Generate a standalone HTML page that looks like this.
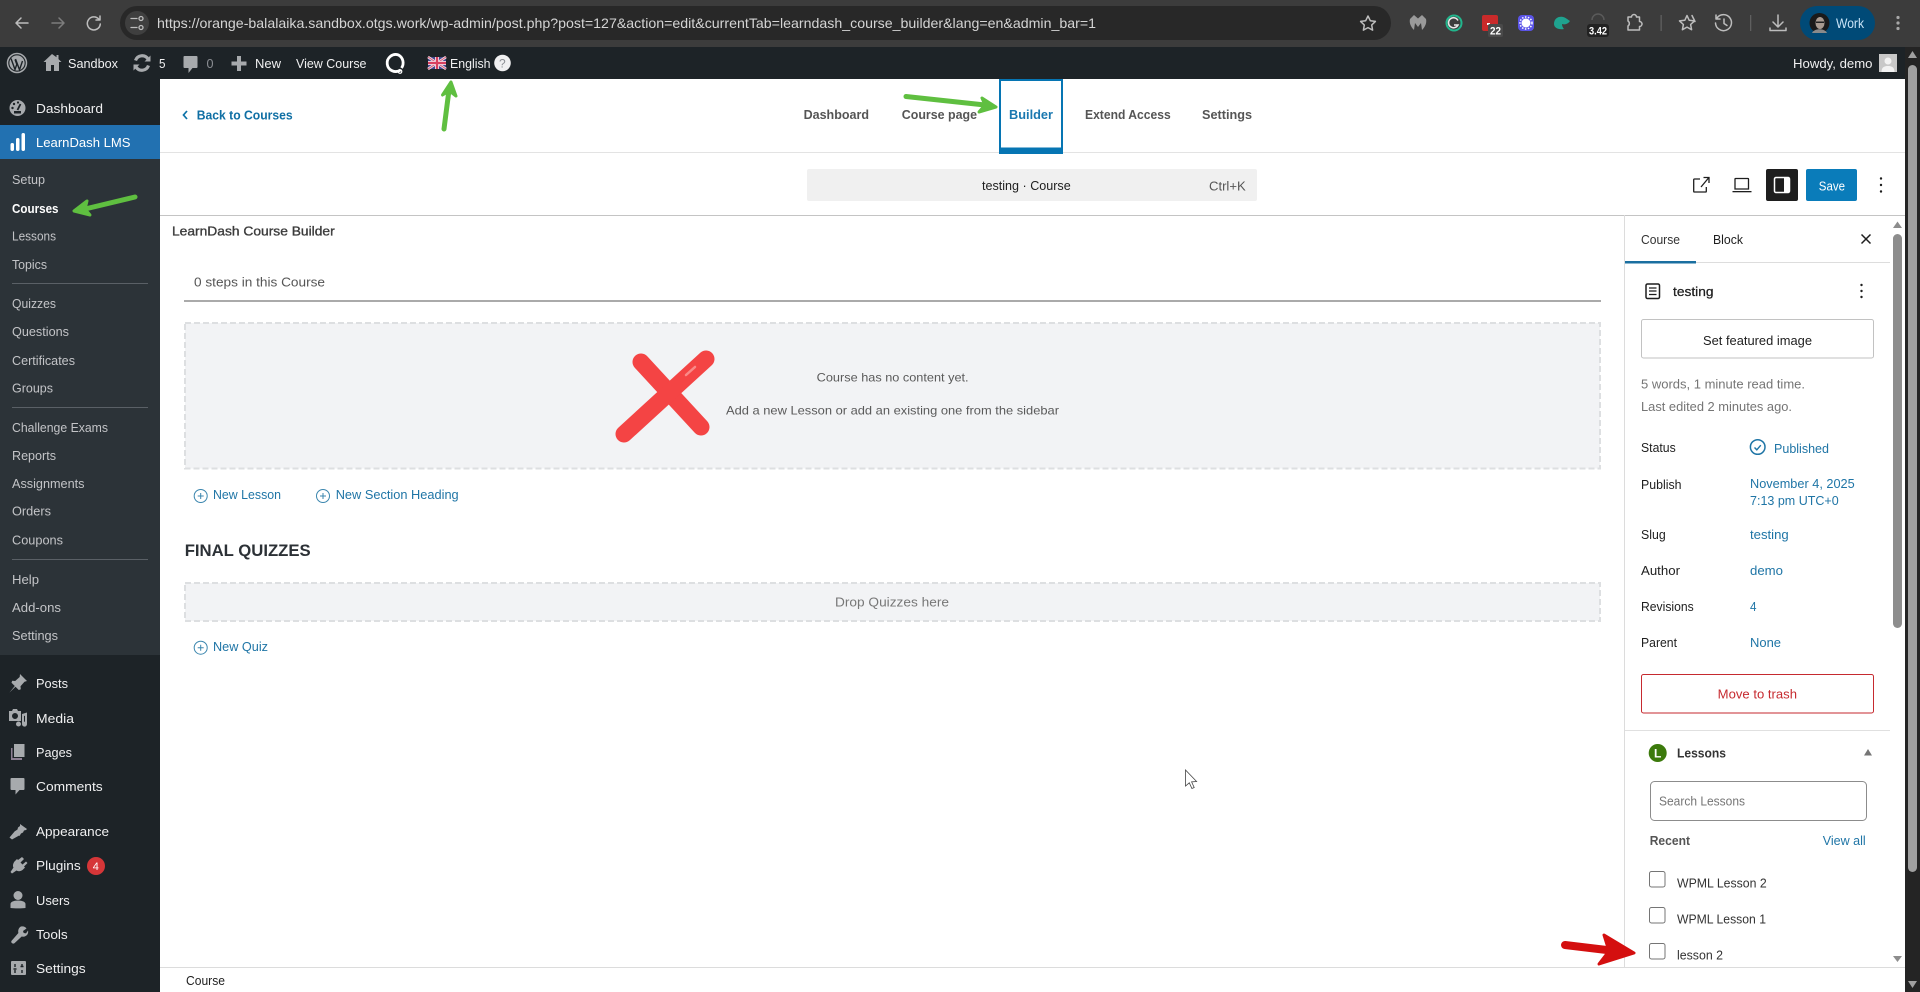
<!DOCTYPE html>
<html lang="en">
<head>
<meta charset="utf-8">
<title>testing - Course Builder</title>
<style>
html,body{margin:0;padding:0;width:1920px;height:992px;overflow:hidden;background:#fff}
svg{display:block}
text{font-family:"Liberation Sans",Arial,sans-serif;font-size:13px;white-space:pre}
.s{fill:#c3c4c7}
.m{fill:#f0f0f1}
.d{fill:#1e1e1e}
.l{fill:#1f75a6}
.b{font-weight:700}
.ic{fill:#a7aaad}
.cs{fill:none;stroke:#bdbdbd;stroke-width:1.5;stroke-linecap:round;stroke-linejoin:round}
.ts{fill:none;stroke:#1e1e1e;stroke-width:1.3}
</style>
</head>
<body>
<svg width="1920" height="992" viewBox="0 0 1920 992" xmlns="http://www.w3.org/2000/svg">
<rect width="1920" height="992" fill="#fff"/>

<!-- Browser toolbar -->
<rect width="1920" height="47" fill="#3c3c3c"/>
<path class="cs" d="M28 23H16M21 18l-5 5 5 5"/>
<path class="cs" style="stroke:#7d7d7d" d="M52 23h12M59 18l5 5-5 5"/>
<path class="cs" d="M99 19.500a6.500 6.500 0 1 0 1.300 4.500M100 16v4h-4"/>
<rect x="120" y="6" width="1271" height="34" rx="17" fill="#282828"/>
<circle cx="137" cy="23" r="12" fill="#3f3f3f"/>
<path class="cs" style="stroke-width:1.300" d="M131 18.500h6M131 27.500h6"/>
<circle cx="141" cy="18.500" r="2" class="cs" style="stroke-width:1.300"/>
<circle cx="141" cy="27.500" r="2" class="cs" style="stroke-width:1.300"/>
<text x="157" y="28" style="font-size:14px" fill="#d4d4d4" textLength="939" lengthAdjust="spacingAndGlyphs">https://orange-balalaika.sandbox.otgs.work/wp-admin/post.php?post=127&amp;action=edit&amp;currentTab=learndash_course_builder&amp;lang=en&amp;admin_bar=1</text>
<path class="cs" d="M1368 16l2.300 4.700 5.100.7-3.700 3.600.9 5.100-4.600-2.500-4.600 2.500.9-5.100-3.700-3.600 5.100-.7z"/>

<!-- Extensions -->
<path fill="#9a9a9a" d="M1410 19l4-4 4 3.500 4-3.500 4 4c1 4-1 8-4 11l-1-7-3 4-3-4-1 7c-3-3-5-7-4-11z"/>
<circle cx="1454" cy="23" r="7.500" fill="none" stroke="#22b58c" stroke-width="2"/>
<path d="M1458 20.500a5 5 0 1 0 0 4.500h-4" fill="none" stroke="#e8e8e8" stroke-width="1.600"/>
<rect x="1482" y="15" width="16" height="16" rx="2" fill="#c92a2a"/>
<rect x="1487" y="23" width="3" height="2" fill="#fff"/>
<rect x="1488" y="24" width="15" height="13" rx="2" fill="#4a4a4a"/>
<text x="1490" y="34.500" style="font-size:11px;font-weight:700" fill="#fff" textLength="11" lengthAdjust="spacingAndGlyphs">22</text>
<rect x="1518" y="15" width="16" height="16" rx="4" fill="#5b54e8"/>
<circle cx="1526" cy="23" r="4.500" fill="#fff"/>
<circle cx="1526" cy="23" r="6" fill="none" stroke="#fff" stroke-width="1.500" stroke-dasharray="1.500 1.500"/>
<path d="M1554 24c0-6 5-8 9-7 3 .5 5 3 7 4-2 3-5 4-8 3 0 2 1 4 2 5-5 1-10-1-10-5z" fill="#1fa38f"/>
<path d="M1592 20a6 6 0 0 1 12 0" fill="none" stroke="#5a5a5a" stroke-width="1.500"/>
<rect x="1587" y="24" width="22" height="13" rx="3" fill="#222"/>
<text x="1589" y="34.500" style="font-size:11px;font-weight:700" fill="#fff" textLength="18" lengthAdjust="spacingAndGlyphs">3.42</text>
<path class="cs" d="M1628 17h3.500a2.500 2.500 0 0 1 5 0h3v4.500a2.500 2.500 0 0 1 0 5V30h-11.500v-4a3 3 0 0 0 0-5z"/>
<rect x="1660.500" y="15" width="1.300" height="16" fill="#5f5f5f"/>
<path class="cs" d="M1687 15.500l2.200 4.800 5.300.6-3.900 3.600 1 5.200-4.600-2.600-4.600 2.600 1-5.200-3.900-3.600 5.300-.6zM1692 15.500l3 6"/>
<path class="cs" d="M1717 18a8 8 0 1 1-1.500 5M1716 15v4h4M1724 19v4.500l3 2"/>
<rect x="1750" y="15" width="1.300" height="16" fill="#5f5f5f"/>
<path class="cs" d="M1778 15v11M1773 22l5 5 5-5M1770 28v2.500h16V28"/>
<rect x="1800" y="6" width="75" height="34" rx="17" fill="#004a77"/>
<circle cx="1819.500" cy="23" r="10" fill="#1a1a1a"/>
<ellipse cx="1820" cy="23" rx="4.500" ry="6" fill="#a89a90"/>
<path d="M1812 33c2-5 13-5 15 0z" fill="#8a8a8a"/>
<rect x="1816" y="21.500" width="8" height="1.500" fill="#222"/>
<text x="1836" y="28" style="font-size:14px" fill="#c7e3f7" textLength="28" lengthAdjust="spacingAndGlyphs">Work</text>
<g fill="#a8a8a8"><circle cx="1898" cy="17.500" r="1.600"/><circle cx="1898" cy="23" r="1.600"/><circle cx="1898" cy="28.500" r="1.600"/></g>

<!-- Admin bar -->
<rect y="47" width="1920" height="32" fill="#1d2327"/>
<circle cx="17" cy="63" r="9.500" fill="none" stroke="#a7aaad" stroke-width="1.500"/>
<circle cx="17" cy="63" r="7.600" fill="#a7aaad"/>
<path d="M11 58.500l4 11 1.800-5.200L15 59.500M15.500 59l4 10.800 3-8.800" fill="none" stroke="#1d2327" stroke-width="1.400"/>
<path class="ic" d="M52 54l-8.500 8h2.500v9h5v-6h3v6h5v-9h2.500l-3-2.900V55h-2v2.200z"/>
<text class="m" x="68" y="68" textLength="50" lengthAdjust="spacingAndGlyphs">Sandbox</text>
<path d="M135.500 60.500a7 7 0 0 1 12.500-1.500M148.500 65.500a7 7 0 0 1-12.500 1.500" fill="none" stroke="#a7aaad" stroke-width="3.200"/>
<path class="ic" d="M150.500 55.500v6h-6zM133.500 70.500v-6h6z"/>
<text class="m" x="159" y="68" textLength="6.500" lengthAdjust="spacingAndGlyphs">5</text>
<path class="ic" d="M184.500 56h12a1 1 0 0 1 1 1v10a1 1 0 0 1-1 1h-4l-4 5v-5h-4a1 1 0 0 1-1-1V57a1 1 0 0 1 1-1z"/>
<text x="206.500" y="68" fill="#8c8f94" textLength="7" lengthAdjust="spacingAndGlyphs">0</text>
<path class="ic" d="M237 56h4v5.500h5.500v4H241V71h-4v-5.500h-5.500v-4H237z"/>
<text class="m" x="255" y="68" textLength="26" lengthAdjust="spacingAndGlyphs">New</text>
<text class="m" x="296" y="68" textLength="70.500" lengthAdjust="spacingAndGlyphs">View Course</text>
<path d="M400.500 70a8.500 8.500 0 1 1-2-15 9 9 0 0 1 3 13" fill="none" stroke="#fff" stroke-width="2.800"/>
<circle cx="400" cy="71.500" r="1.800" fill="none" stroke="#fff" stroke-width="1.200"/>
<!-- flag -->
<g>
<rect x="428" y="57" width="18" height="12" fill="#41478f"/>
<path d="M428 57l18 12M446 57l-18 12" stroke="#f2dce4" stroke-width="2.600"/>
<path d="M428 57l18 12M446 57l-18 12" stroke="#d85a78" stroke-width="1"/>
<path d="M437 57v12M428 63h18" stroke="#f2dce4" stroke-width="4"/>
<path d="M437 57v12M428 63h18" stroke="#d8405f" stroke-width="2.200"/>
</g>
<text class="m" x="450" y="68" textLength="40.500" lengthAdjust="spacingAndGlyphs">English</text>
<circle cx="502.500" cy="63" r="8.300" fill="#f0f0f1"/>
<text x="499" y="67.500" style="font-size:12px" fill="#8c8f94">?</text>
<text class="m" x="1793" y="68" textLength="79.500" lengthAdjust="spacingAndGlyphs">Howdy, demo</text>
<rect x="1879" y="54" width="18" height="18" fill="#c8c8c8"/>
<circle cx="1888" cy="61" r="3.500" fill="#f2f2f2"/>
<path d="M1881.500 72c0-5 3-6 6.500-6s6.500 1 6.500 6z" fill="#f2f2f2"/>

<!-- Sidebar -->
<rect y="79" width="160" height="913" fill="#1d2327"/>
<rect y="159" width="160" height="496" fill="#2c3338"/>
<rect y="125" width="160" height="34" fill="#2271b1"/>

<circle cx="17.500" cy="108" r="8" class="ic"/>
<path d="M17.500 110l3-6" stroke="#1d2327" stroke-width="1.800"/>
<g fill="#1d2327"><circle cx="12.500" cy="108" r="1.200"/><circle cx="14" cy="104" r="1.200"/><circle cx="18" cy="102.500" r="1.100"/><rect x="14" y="111" width="7" height="2.500"/></g>
<text class="m" x="36" y="113" textLength="67" lengthAdjust="spacingAndGlyphs">Dashboard</text>
<g fill="#fff"><rect x="10.500" y="143" width="3.500" height="8" rx="1.700"/><rect x="16" y="138" width="3.500" height="13" rx="1.700"/><rect x="21.500" y="133" width="3.500" height="18" rx="1.700"/></g>
<text fill="#fff" x="36" y="147" textLength="94.500" lengthAdjust="spacingAndGlyphs">LearnDash LMS</text>

<text class="s" x="12" y="184" textLength="33" lengthAdjust="spacingAndGlyphs">Setup</text>
<text fill="#fff" class="b" x="12" y="213" textLength="46.500" lengthAdjust="spacingAndGlyphs">Courses</text>
<text class="s" x="12" y="240.500" textLength="44" lengthAdjust="spacingAndGlyphs">Lessons</text>
<text class="s" x="12" y="269" textLength="35" lengthAdjust="spacingAndGlyphs">Topics</text>
<rect x="12" y="283" width="136" height="1" fill="#5a6066"/>
<text class="s" x="12" y="308" textLength="44" lengthAdjust="spacingAndGlyphs">Quizzes</text>
<text class="s" x="12" y="336" textLength="57" lengthAdjust="spacingAndGlyphs">Questions</text>
<text class="s" x="12" y="365" textLength="63" lengthAdjust="spacingAndGlyphs">Certificates</text>
<text class="s" x="12" y="392.500" textLength="41" lengthAdjust="spacingAndGlyphs">Groups</text>
<rect x="12" y="407" width="136" height="1" fill="#5a6066"/>
<text class="s" x="12" y="432" textLength="96" lengthAdjust="spacingAndGlyphs">Challenge Exams</text>
<text class="s" x="12" y="460" textLength="44" lengthAdjust="spacingAndGlyphs">Reports</text>
<text class="s" x="12" y="488" textLength="72.500" lengthAdjust="spacingAndGlyphs">Assignments</text>
<text class="s" x="12" y="515.500" textLength="39" lengthAdjust="spacingAndGlyphs">Orders</text>
<text class="s" x="12" y="544.500" textLength="51" lengthAdjust="spacingAndGlyphs">Coupons</text>
<rect x="12" y="559" width="136" height="1" fill="#5a6066"/>
<text class="s" x="12" y="584" textLength="27" lengthAdjust="spacingAndGlyphs">Help</text>
<text class="s" x="12" y="612" textLength="49" lengthAdjust="spacingAndGlyphs">Add-ons</text>
<text class="s" x="12" y="640" textLength="46" lengthAdjust="spacingAndGlyphs">Settings</text>

<path class="ic" d="M20 674l7 7-2.500.8-4 4.500.3 3-2 .7-3.300-3.300-6 5.800 5.300-6.500-3.300-3.300.7-2 3 .3 4.500-4z"/>
<text class="m" x="36" y="688" textLength="32" lengthAdjust="spacingAndGlyphs">Posts</text>
<path class="ic" fill-rule="evenodd" d="M9 711h3l1-2h4l1 2h3v10H9zM15 713a3 3 0 1 0 0 6 3 3 0 0 0 0-6z"/>
<path class="ic" d="M22 714l5-1.500V724a2.500 2.500 0 1 1-2-2.300v-6l-1 .3v7.500h-2z"/>
<circle cx="18.500" cy="724" r="2.500" class="ic"/>
<text class="m" x="36" y="723" textLength="38" lengthAdjust="spacingAndGlyphs">Media</text>
<path class="ic" d="M14 744h10.500v13H14z"/>
<path d="M11 748h1.500v10H22v2H11z" fill="#8d7f93"/>
<text class="m" x="36" y="757" textLength="36" lengthAdjust="spacingAndGlyphs">Pages</text>
<path class="ic" d="M11.500 778h12a1 1 0 0 1 1 1v10a1 1 0 0 1-1 1h-4l-4 4.500V790h-4a1 1 0 0 1-1-1v-10a1 1 0 0 1 1-1z"/>
<text class="m" x="36" y="791" textLength="66.700" lengthAdjust="spacingAndGlyphs">Comments</text>
<path class="ic" d="M20 824l7 5-1 1-2 .5-1 2-2 1-1.500 2.500-5-4.500 3-2 .5-2 2-1.500zM15 831l5 4-8 4.500-2.500-2z"/>
<text class="m" x="36" y="836" textLength="73" lengthAdjust="spacingAndGlyphs">Appearance</text>
<path class="ic" d="M22 857l2 2-3.500 3.500 2 2 3.500-3 1.500 1.500-3.500 3.500 1 1-2.500 2.500c-2 1.500-4.500 1.500-6 .5l-4.500 3-1.500-1.500 3-4.500c-1-1.500-.5-4 1-6l2.500-2.500 1 1z"/>
<text class="m" x="36" y="870" textLength="44.700" lengthAdjust="spacingAndGlyphs">Plugins</text>
<circle cx="96" cy="866" r="9" fill="#d63638"/>
<text x="92.700" y="870" style="font-size:11px" fill="#fff">4</text>
<circle cx="18" cy="895.500" r="4.500" class="ic"/>
<path class="ic" d="M10.500 908v-4c0-2 3-3.500 7.500-3.500s7.500 1.500 7.500 3.500v4c-3 .5-12 .5-15 0z"/>
<text class="m" x="36" y="905" textLength="33.700" lengthAdjust="spacingAndGlyphs">Users</text>
<path class="ic" d="M21 926.500c2.500-.6 4.500.4 5.500 2l-3.500 2.500.7 2 2.300.4 2-2.900c.6 2.500-.5 5-3.300 6-1 .3-2 .3-3 0l-7 6.500c-1.500 1.500-4 0-3.300-2l7-8c-.7-2.800.6-5.700 2.600-6.500z"/>
<text class="m" x="36" y="939" textLength="31.700" lengthAdjust="spacingAndGlyphs">Tools</text>
<rect x="11" y="961" width="15" height="14" rx="1" class="ic"/>
<path d="M15 964v3M15 970v3M13.500 969h3M22 964v3M22 970v3M20.500 966.500h3" stroke="#1d2327" stroke-width="1.400" fill="none"/>
<text class="m" x="36" y="973" textLength="49.700" lengthAdjust="spacingAndGlyphs">Settings</text>

<!-- Header -->
<path d="M187 111l-3.500 4 3.500 4" fill="none" stroke="#0b72a8" stroke-width="1.700"/>
<text class="b" x="196.700" y="119.500" fill="#0f6fa4" textLength="96" lengthAdjust="spacingAndGlyphs">Back to Courses</text>
<rect x="160" y="152" width="1745" height="1" fill="#e3e3e3"/>
<text class="b" x="803.600" y="119" fill="#555" textLength="65.400" lengthAdjust="spacingAndGlyphs">Dashboard</text>
<text class="b" x="901.800" y="119" fill="#555" textLength="75.200" lengthAdjust="spacingAndGlyphs">Course page</text>
<rect x="999" y="79" width="2" height="75" fill="#0675b3"/>
<rect x="1061" y="79" width="2" height="75" fill="#0675b3"/>
<rect x="999" y="79" width="64" height="2" fill="#0675b3"/>
<rect x="999" y="147.500" width="64" height="6.500" fill="#0675b3"/>
<text class="b" x="1009" y="119" fill="#1a78b0" textLength="44" lengthAdjust="spacingAndGlyphs">Builder</text>
<text class="b" x="1085" y="119" fill="#555" textLength="85.700" lengthAdjust="spacingAndGlyphs">Extend Access</text>
<text class="b" x="1202" y="119" fill="#555" textLength="50" lengthAdjust="spacingAndGlyphs">Settings</text>

<!-- Editor top bar -->
<rect x="807" y="169" width="450" height="32" rx="2" fill="#f0f0f0"/>
<text class="d" x="982" y="190" textLength="88.700" lengthAdjust="spacingAndGlyphs">testing · Course</text>
<text x="1209" y="190.500" fill="#555" textLength="36.700" lengthAdjust="spacingAndGlyphs">Ctrl+K</text>
<path class="ts" d="M1700 179h-5.500a.8.800 0 0 0-.8.800v11.400a.8.800 0 0 0 .8.800h11a.8.800 0 0 0 .8-.8V187M1701 187l7.500-9M1703.500 177.500h5.500v5.500"/>
<path class="ts" d="M1735.500 178.500h12.500a.5.500 0 0 1 .5.500v10h-13.500v-10a.5.500 0 0 1 .5-.5z"/>
<rect x="1732.500" y="191" width="19" height="1.300" fill="#1e1e1e"/>
<rect x="1766" y="169" width="32" height="32" rx="2" fill="#1e1e1e"/>
<rect x="1774.500" y="177.500" width="15" height="15" rx="1.500" fill="none" stroke="#fff" stroke-width="1.500"/>
<rect x="1784" y="178" width="5" height="14" fill="#fff"/>
<rect x="1806" y="169" width="51" height="32" rx="2" fill="#0a7cba"/>
<text x="1818.800" y="190.500" fill="#fff" textLength="26.200" lengthAdjust="spacingAndGlyphs">Save</text>
<g fill="#1e1e1e"><circle cx="1881" cy="178.500" r="1.200"/><circle cx="1881" cy="185" r="1.200"/><circle cx="1881" cy="191.500" r="1.200"/></g>
<rect x="160" y="215" width="1745" height="1" fill="#c4c4c4"/>

<!-- Course builder -->
<text x="172" y="235.500" fill="#3c3c3c" stroke="#3c3c3c" stroke-width=".35" textLength="162.700" lengthAdjust="spacingAndGlyphs">LearnDash Course Builder</text>
<text x="194" y="286.700" fill="#555" textLength="131" lengthAdjust="spacingAndGlyphs">0 steps in this Course</text>
<rect x="184" y="300.500" width="1417" height="1" fill="#555"/>
<rect x="185" y="323" width="1415" height="145.500" fill="#f2f3f5" stroke="#dddfe1" stroke-width="2" stroke-dasharray="6 3"/>
<text x="816.700" y="381.700" style="font-size:12px" fill="#5a5a5a" textLength="151.900" lengthAdjust="spacingAndGlyphs">Course has no content yet.</text>
<text x="726" y="414.500" style="font-size:12px" fill="#5a5a5a" textLength="333" lengthAdjust="spacingAndGlyphs">Add a new Lesson or add an existing one from the sidebar</text>

<g fill="none" stroke="#f44444" stroke-linecap="round" stroke-width="17">
<path d="M641 362L701 427"/>
<path d="M706 359L624 434"/>
</g>
<path d="M686 375L695 367" stroke="#f98a88" stroke-width="2.500" stroke-linecap="round"/>

<g fill="none" stroke="#3b86ae" stroke-width="1">
<circle cx="200.700" cy="496" r="6.500"/><path d="M200.700 493v6M197.700 496h6"/>
<circle cx="323" cy="496" r="6.500"/><path d="M323 493v6M320 496h6"/>
<circle cx="200.700" cy="647.700" r="6.500"/><path d="M200.700 644.700v6M197.700 647.700h6"/>
</g>
<text class="l" x="213" y="499" textLength="68" lengthAdjust="spacingAndGlyphs">New Lesson</text>
<text class="l" x="335.700" y="499" textLength="123" lengthAdjust="spacingAndGlyphs">New Section Heading</text>
<text x="184.700" y="556" style="font-size:17px;font-weight:700" fill="#2c3136" textLength="126" lengthAdjust="spacingAndGlyphs">FINAL QUIZZES</text>
<rect x="185" y="583" width="1415" height="38" fill="#f2f3f5" stroke="#dddfe1" stroke-width="2" stroke-dasharray="6 3"/>
<text x="835" y="606.500" fill="#777" textLength="114" lengthAdjust="spacingAndGlyphs">Drop Quizzes here</text>
<text class="l" x="213" y="651" textLength="55" lengthAdjust="spacingAndGlyphs">New Quiz</text>

<!-- Cursor -->
<path d="M1185.500 770v16l3.800-3.200 2.600 5.700 2.300-1-2.600-5.600 5-.4z" fill="#fff" stroke="#444" stroke-width=".8"/>

<!-- Settings sidebar -->
<rect x="1624" y="215" width="1" height="752" fill="#dcdcdc"/>
<rect x="1625" y="262" width="265" height="1" fill="#dddddd"/>
<rect x="1625" y="261" width="71" height="2.500" fill="#1a6fa0"/>
<text x="1641" y="244" fill="#333" textLength="39" lengthAdjust="spacingAndGlyphs">Course</text>
<text class="d" x="1713" y="244" textLength="30" lengthAdjust="spacingAndGlyphs">Block</text>
<path d="M1861.500 234.500l9 9M1870.500 234.500l-9 9" stroke="#1e1e1e" stroke-width="1.500"/>
<rect x="1893" y="234" width="9" height="394" rx="4.500" fill="#8d8d8d"/>
<path d="M1897.500 221.500l4.500 6.500h-9z" fill="#8d8d8d"/>
<path d="M1897.500 962l-4.500-6h9z" fill="#8d8d8d"/>

<rect x="1646" y="284" width="13.500" height="14.500" rx="1.500" fill="none" stroke="#1e1e1e" stroke-width="1.500"/>
<path d="M1649 288h7.500M1649 291h7.500M1649 294.500h7.500" stroke="#1e1e1e" stroke-width="1.300"/>
<text x="1673" y="296" fill="#1e1e1e" stroke="#1e1e1e" stroke-width=".25" textLength="40.500" lengthAdjust="spacingAndGlyphs">testing</text>
<g fill="#1e1e1e"><circle cx="1861.500" cy="285" r="1.200"/><circle cx="1861.500" cy="291" r="1.200"/><circle cx="1861.500" cy="297" r="1.200"/></g>
<rect x="1641.500" y="319.500" width="232" height="38.500" rx="2" fill="#fff" stroke="#c2c2c2"/>
<text class="d" x="1703" y="345" textLength="109" lengthAdjust="spacingAndGlyphs">Set featured image</text>
<text x="1641" y="388.500" fill="#757575" textLength="164" lengthAdjust="spacingAndGlyphs">5 words, 1 minute read time.</text>
<text x="1641" y="411" fill="#757575" textLength="151" lengthAdjust="spacingAndGlyphs">Last edited 2 minutes ago.</text>

<text class="d" x="1641" y="452" textLength="34.700" lengthAdjust="spacingAndGlyphs">Status</text>
<circle cx="1757.700" cy="447" r="7.300" fill="none" stroke="#1f75a6" stroke-width="1.500"/>
<path d="M1754.500 447.500l2.300 2.300 4-4.600" fill="none" stroke="#1f75a6" stroke-width="1.400"/>
<text class="l" x="1774" y="453" textLength="55" lengthAdjust="spacingAndGlyphs">Published</text>
<text class="d" x="1641" y="489" textLength="40.500" lengthAdjust="spacingAndGlyphs">Publish</text>
<text class="l" x="1750" y="488" textLength="104.700" lengthAdjust="spacingAndGlyphs">November 4, 2025</text>
<text class="l" x="1750" y="505" textLength="88.700" lengthAdjust="spacingAndGlyphs">7:13 pm UTC+0</text>
<text class="d" x="1641" y="539" textLength="24.700" lengthAdjust="spacingAndGlyphs">Slug</text>
<text class="l" x="1750" y="539" textLength="38.700" lengthAdjust="spacingAndGlyphs">testing</text>
<text class="d" x="1641" y="575" textLength="39" lengthAdjust="spacingAndGlyphs">Author</text>
<text class="l" x="1750" y="575" textLength="33" lengthAdjust="spacingAndGlyphs">demo</text>
<text class="d" x="1641" y="611" textLength="52.700" lengthAdjust="spacingAndGlyphs">Revisions</text>
<text class="l" x="1750" y="611" textLength="6.500" lengthAdjust="spacingAndGlyphs">4</text>
<text class="d" x="1641" y="647" textLength="36" lengthAdjust="spacingAndGlyphs">Parent</text>
<text class="l" x="1750" y="647" textLength="31" lengthAdjust="spacingAndGlyphs">None</text>

<rect x="1641.500" y="674.500" width="232" height="38.500" rx="2" fill="#fff" stroke="#c62a2f"/>
<text x="1717.700" y="698.500" fill="#c62a2f" textLength="79.300" lengthAdjust="spacingAndGlyphs">Move to trash</text>
<rect x="1625" y="730" width="265" height="1" fill="#e0e0e0"/>

<circle cx="1657.700" cy="753" r="9" fill="#3c7a0c"/>
<text x="1654" y="757.500" style="font-size:12px;font-weight:700" fill="#fff">L</text>
<text class="b" x="1677" y="757.500" fill="#333" textLength="49" lengthAdjust="spacingAndGlyphs">Lessons</text>
<path d="M1868 749l4 6.500h-8z" fill="#757575"/>
<rect x="1650.500" y="781.500" width="216" height="39" rx="4" fill="#fff" stroke="#8c8c8c"/>
<text x="1659" y="805.500" fill="#757575" textLength="86" lengthAdjust="spacingAndGlyphs">Search Lessons</text>
<text class="b" x="1649.700" y="845" fill="#555" textLength="40.300" lengthAdjust="spacingAndGlyphs">Recent</text>
<text class="l" x="1822.700" y="845" textLength="43" lengthAdjust="spacingAndGlyphs">View all</text>
<g fill="#fff" stroke="#757575">
<rect x="1649.500" y="871.500" width="15.500" height="15.500" rx="2"/>
<rect x="1649.500" y="907.500" width="15.500" height="15.500" rx="2"/>
<rect x="1649.500" y="943.500" width="15.500" height="15.500" rx="2"/>
</g>
<text x="1677" y="887.500" fill="#333" textLength="89.700" lengthAdjust="spacingAndGlyphs">WPML Lesson 2</text>
<text x="1677" y="923.500" fill="#333" textLength="89" lengthAdjust="spacingAndGlyphs">WPML Lesson 1</text>
<text x="1677" y="959.500" fill="#333" textLength="46" lengthAdjust="spacingAndGlyphs">lesson 2</text>

<!-- Footer -->
<rect x="160" y="967" width="1745" height="25" fill="#fff"/>
<rect x="160" y="967" width="1745" height="1" fill="#dcdcdc"/>
<text class="d" x="186" y="985" textLength="39" lengthAdjust="spacingAndGlyphs">Course</text>

<!-- Browser scrollbar -->
<rect x="1905" y="47" width="15" height="945" fill="#242424"/>
<rect x="1908" y="65" width="9" height="807" rx="4.500" fill="#a0a0a0"/>
<path d="M1912.500 51l4.500 7h-9z" fill="#a0a0a0"/>
<path d="M1912.500 988l-4.500-7h9z" fill="#a0a0a0"/>

<!-- Annotation arrows -->
<g fill="none" stroke="#5fbf40" stroke-linecap="round" stroke-linejoin="round">
<path stroke-width="5" d="M444 129L449 90"/>
<path stroke-width="3" d="M442.500 95L451 82 456 96 449.500 91z" fill="#5fbf40"/>
<path stroke-width="5" d="M135 197L85 209"/>
<path stroke-width="3" d="M87 201L74 211 90 215 85 209z" fill="#5fbf40"/>
<path stroke-width="5" d="M906 96.500L985 105"/>
<path stroke-width="3" d="M982 98L996 107 979 112 985 105z" fill="#5fbf40"/>
</g>
<g fill="#d40f0f" stroke="#d40f0f" stroke-linejoin="round" stroke-linecap="round">
<path stroke-width="8" d="M1565 945L1615 951" fill="none"/>
<path stroke-width="3" d="M1604 935L1634 953 1599 964 1609 951z"/>
</g>
</svg>
</body>
</html>
